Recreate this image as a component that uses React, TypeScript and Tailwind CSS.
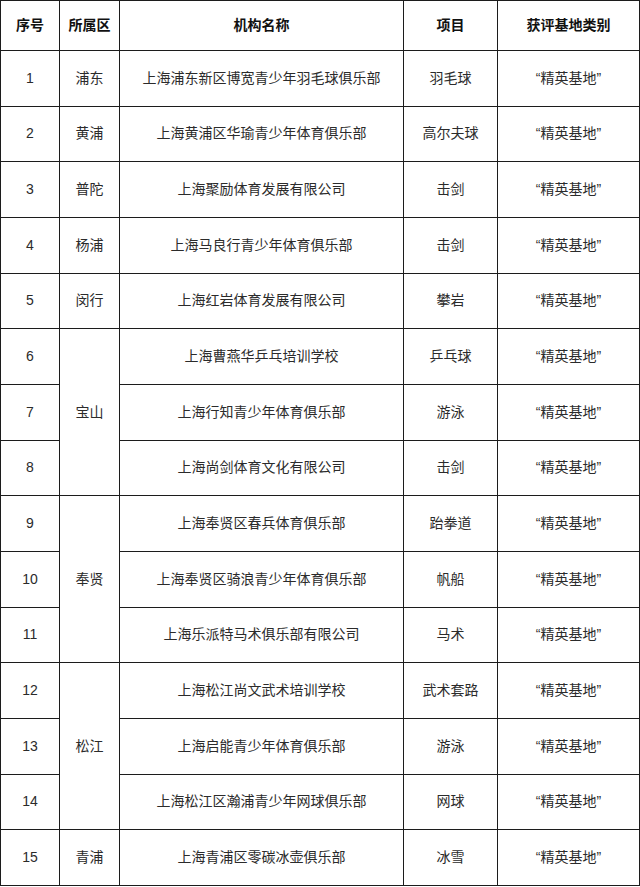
const rows: { no: number; district?: string; span?: number; org: string; item: string }[] = [
  { no: 1, district: "浦东", span: 1, org: "上海浦东新区博宽青少年羽毛球俱乐部", item: "羽毛球" },
  { no: 2, district: "黄浦", span: 1, org: "上海黄浦区华瑜青少年体育俱乐部", item: "高尔夫球" },
  { no: 3, district: "普陀", span: 1, org: "上海聚励体育发展有限公司", item: "击剑" },
  { no: 4, district: "杨浦", span: 1, org: "上海马良行青少年体育俱乐部", item: "击剑" },
  { no: 5, district: "闵行", span: 1, org: "上海红岩体育发展有限公司", item: "攀岩" },
  { no: 6, district: "宝山", span: 3, org: "上海曹燕华乒乓培训学校", item: "乒乓球" },
  { no: 7, org: "上海行知青少年体育俱乐部", item: "游泳" },
  { no: 8, org: "上海尚剑体育文化有限公司", item: "击剑" },
  { no: 9, district: "奉贤", span: 3, org: "上海奉贤区春兵体育俱乐部", item: "跆拳道" },
  { no: 10, org: "上海奉贤区骑浪青少年体育俱乐部", item: "帆船" },
  { no: 11, org: "上海乐派特马术俱乐部有限公司", item: "马术" },
  { no: 12, district: "松江", span: 3, org: "上海松江尚文武术培训学校", item: "武术套路" },
  { no: 13, org: "上海启能青少年体育俱乐部", item: "游泳" },
  { no: 14, org: "上海松江区瀚浦青少年网球俱乐部", item: "网球" },
  { no: 15, district: "青浦", span: 1, org: "上海青浦区零碳冰壶俱乐部", item: "冰雪" },
];

const cell = "border border-[#1c1c1c] text-center align-middle";

export default function App() {
  return (
    <div className="bg-white w-[640px] h-[887px] font-['Liberation_Sans','Noto_Sans_CJK_SC',sans-serif] text-[14px] text-[#2b2b2b]">
      <table className="border-collapse w-[639px] h-[886px] table-fixed">
        <colgroup>
          <col className="w-[59px]" />
          <col className="w-[60px]" />
          <col className="w-[284px]" />
          <col className="w-[94px]" />
          <col className="w-[142px]" />
        </colgroup>
        <thead>
          <tr className="h-[50px] font-bold text-[#111]">
            <th className={cell}>序号</th>
            <th className={cell}>所属区</th>
            <th className={cell}>机构名称</th>
            <th className={cell}>项目</th>
            <th className={cell}>获评基地类别</th>
          </tr>
        </thead>
        <tbody>
          {rows.map((r) => (
            <tr key={r.no} className="h-[55px]">
              <td className={cell}>{r.no}</td>
              {r.district && (
                <td className={cell} rowSpan={r.span}>
                  {r.district}
                </td>
              )}
              <td className={cell}>{r.org}</td>
              <td className={cell}>{r.item}</td>
              <td className={cell}>“精英基地”</td>
            </tr>
          ))}
        </tbody>
      </table>
    </div>
  );
}
